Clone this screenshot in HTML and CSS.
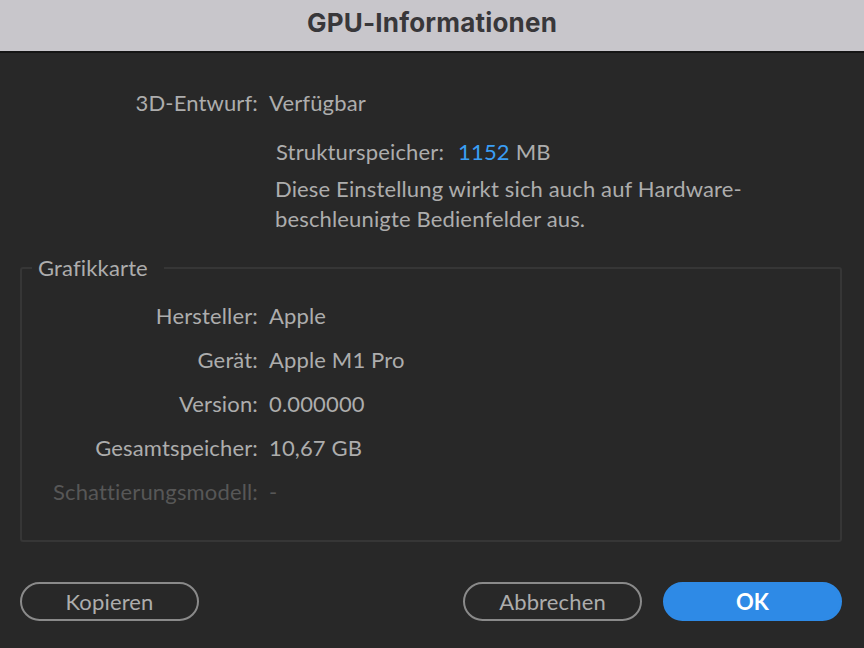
FILE: index.html
```html
<!DOCTYPE html>
<html lang="de">
<head>
<meta charset="utf-8">
<title>GPU-Informationen</title>
<link rel="stylesheet" href="styles.css">
</head>
<body>
<div class="dialog">
  <header class="titlebar"><h1 class="title">GPU-Informationen</h1></header>
  <main class="content">
    <div class="row top-row">
      <span class="label">3D-Entwurf:</span>
      <span class="value">Verfügbar</span>
    </div>
    <div class="texture">
      <div class="texture-line">
        <span class="tlabel">Strukturspeicher:</span>
        <span class="accent">1152</span>
        <span class="unit">MB</span>
      </div>
      <p class="note">Diese Einstellung wirkt sich auch auf Hardware-<br>beschleunigte Bedienfelder aus.</p>
    </div>
    <fieldset class="group">
      <legend class="legend">Grafikkarte</legend>
      <div class="row grow"><span class="label">Hersteller:</span><span class="value">Apple</span></div>
      <div class="row grow"><span class="label">Gerät:</span><span class="value">Apple M1 Pro</span></div>
      <div class="row grow"><span class="label">Version:</span><span class="value">0.000000</span></div>
      <div class="row grow"><span class="label">Gesamtspeicher:</span><span class="value">10,67 GB</span></div>
      <div class="row grow disabled"><span class="label">Schattierungsmodell:</span><span class="value">-</span></div>
    </fieldset>
    <div class="buttons">
      <button class="btn">Kopieren</button>
      <div class="spacer"></div>
      <button class="btn">Abbrechen</button>
      <button class="btn primary">OK</button>
    </div>
  </main>
</div>
</body>
</html>
```
FILE: styles.css
```css
* { box-sizing: border-box; }
html, body {
  margin: 0;
  padding: 0;
  width: 864px;
  height: 648px;
  overflow: hidden;
  background: #282828;
}
body {
  font-family: Lato, "Open Sans", sans-serif;
  font-size: 22px;
  letter-spacing: 0.15px;
  color: #adadad;
}
.dialog {
  display: flex;
  flex-direction: column;
  height: 648px;
}
.titlebar {
  height: 53px;
  flex: none;
  background: #c8c6cb;
  border-bottom: 2px solid #151515;
  display: flex;
  align-items: center;
  justify-content: center;
}
.title {
  margin: 0;
  font-family: Inter, Roboto, sans-serif;
  font-weight: 700;
  font-size: 26px;
  color: #38373a;
  letter-spacing: 0.2px;
  transform: translateY(-3px);
}
.content {
  padding: 37px 0 0;
  display: flex;
  flex-direction: column;
}
.row {
  display: flex;
  line-height: 26px;
}
.row .label {
  width: 258px;
  text-align: right;
  flex: none;
}
.row .value {
  margin-left: 11px;
}
.texture {
  margin: 23px 0 0 276px;
}
.texture-line {
  line-height: 26px;
  display: flex;
}
.accent {
  color: #3a9ef5;
  margin-left: 14px;
}
.unit {
  margin-left: 6px;
}
.note {
  margin: 9px 0 0 -1px;
  line-height: 30px;
}
.group {
  margin: 21px 22px 0 20px;
  padding: 13px 0 26px;
  border: 2px solid #363636;
  border-radius: 3px;
  min-width: 0;
}
.legend {
  margin-left: 10px;
  padding: 0 16px 0 6px;
  line-height: 26px;
}
.grow {
  line-height: 44px;
}
.grow .label {
  width: 236px;
}
.disabled {
  color: #575757;
}
.buttons {
  display: flex;
  padding: 0 22px 0 20px;
  margin-top: 40px;
  gap: 21px;
}
.spacer { flex: 1; }
.btn {
  width: 179px;
  height: 39px;
  border-radius: 20px;
  border: 2px solid #8a8a8a;
  background: transparent;
  color: #adadad;
  font-family: Lato, "Open Sans", sans-serif;
  font-size: 22px;
  letter-spacing: 0.15px;
  padding: 0;
  line-height: 33px;
}
.btn.primary {
  background: #2e8ae6;
  border-color: #2e8ae6;
  color: #ffffff;
  font-weight: 700;
}
```
